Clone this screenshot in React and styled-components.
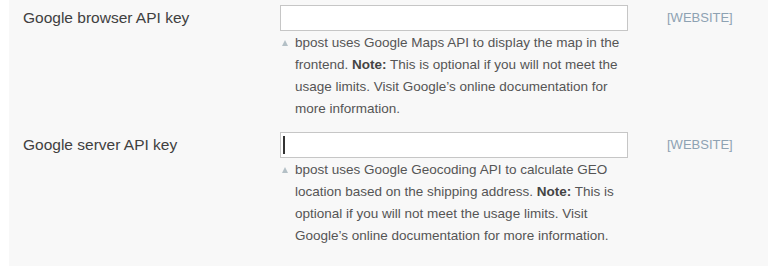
import styled, { createGlobalStyle } from 'styled-components';

const GlobalStyle = createGlobalStyle`
  html, body {
    margin: 0;
    padding: 0;
    background: #fff;
  }
  body {
    font-family: Arial, "Liberation Sans", sans-serif;
  }
`;

const Panel = styled.div`
  margin-left: 9px;
  height: 266px;
  background: #f8f8f8;
  overflow: hidden;
`;

const Row = styled.div`
  display: grid;
  grid-template-columns: 257px 387px 1fr;
  padding: 5px 0 7px 14px;
`;

const Label = styled.label`
  font-size: 15.5px;
  line-height: 18px;
  color: #404040;
  padding-top: 4px;
`;

const Value = styled.div`
  display: flex;
  flex-direction: column;
`;

const InputWrap = styled.div`
  position: relative;
  width: 348px;
`;

const TextInput = styled.input`
  box-sizing: border-box;
  width: 348px;
  height: 26px;
  margin: 0;
  border: 1px solid #c6c6c6;
  background: #fff;
  font: 13px Arial, "Liberation Sans", sans-serif;
  padding: 2px 4px;
  outline: none;
`;

const Caret = styled.span`
  position: absolute;
  left: 3px;
  top: 4px;
  width: 2px;
  height: 18px;
  background: #333;
`;

const Note = styled.p`
  position: relative;
  margin: 1px 0 0;
  padding-left: 15px;
  width: 333px;
  font-size: 13.5px;
  line-height: 22px;
  color: #555;

  &::before {
    content: '';
    position: absolute;
    left: 2px;
    top: 8px;
    border-left: 3.5px solid transparent;
    border-right: 3.5px solid transparent;
    border-bottom: 6px solid #b4c0c6;
  }

  strong {
    font-weight: bold;
    color: #444;
  }
`;

const Scope = styled.div`
  padding-top: 5px;
  font-size: 13px;
  line-height: 16px;
  color: #8ea2b3;
`;

export default function App() {
  return (
    <>
      <GlobalStyle />
      <Panel>
        <Row>
          <Label>Google browser API key</Label>
          <Value>
            <InputWrap>
              <TextInput type="text" />
            </InputWrap>
            <Note>
              bpost uses Google Maps API to display the map in the frontend.{' '}
              <strong>Note:</strong> This is optional if you will not meet the
              usage limits. Visit Google’s online documentation for more
              information.
            </Note>
          </Value>
          <Scope>[WEBSITE]</Scope>
        </Row>
        <Row>
          <Label>Google server API key</Label>
          <Value>
            <InputWrap>
              <TextInput type="text" />
              <Caret />
            </InputWrap>
            <Note>
              bpost uses Google Geocoding API to calculate GEO location based on
              the shipping address. <strong>Note:</strong> This is optional if
              you will not meet the usage limits. Visit Google’s online
              documentation for more information.
            </Note>
          </Value>
          <Scope>[WEBSITE]</Scope>
        </Row>
      </Panel>
    </>
  );
}
